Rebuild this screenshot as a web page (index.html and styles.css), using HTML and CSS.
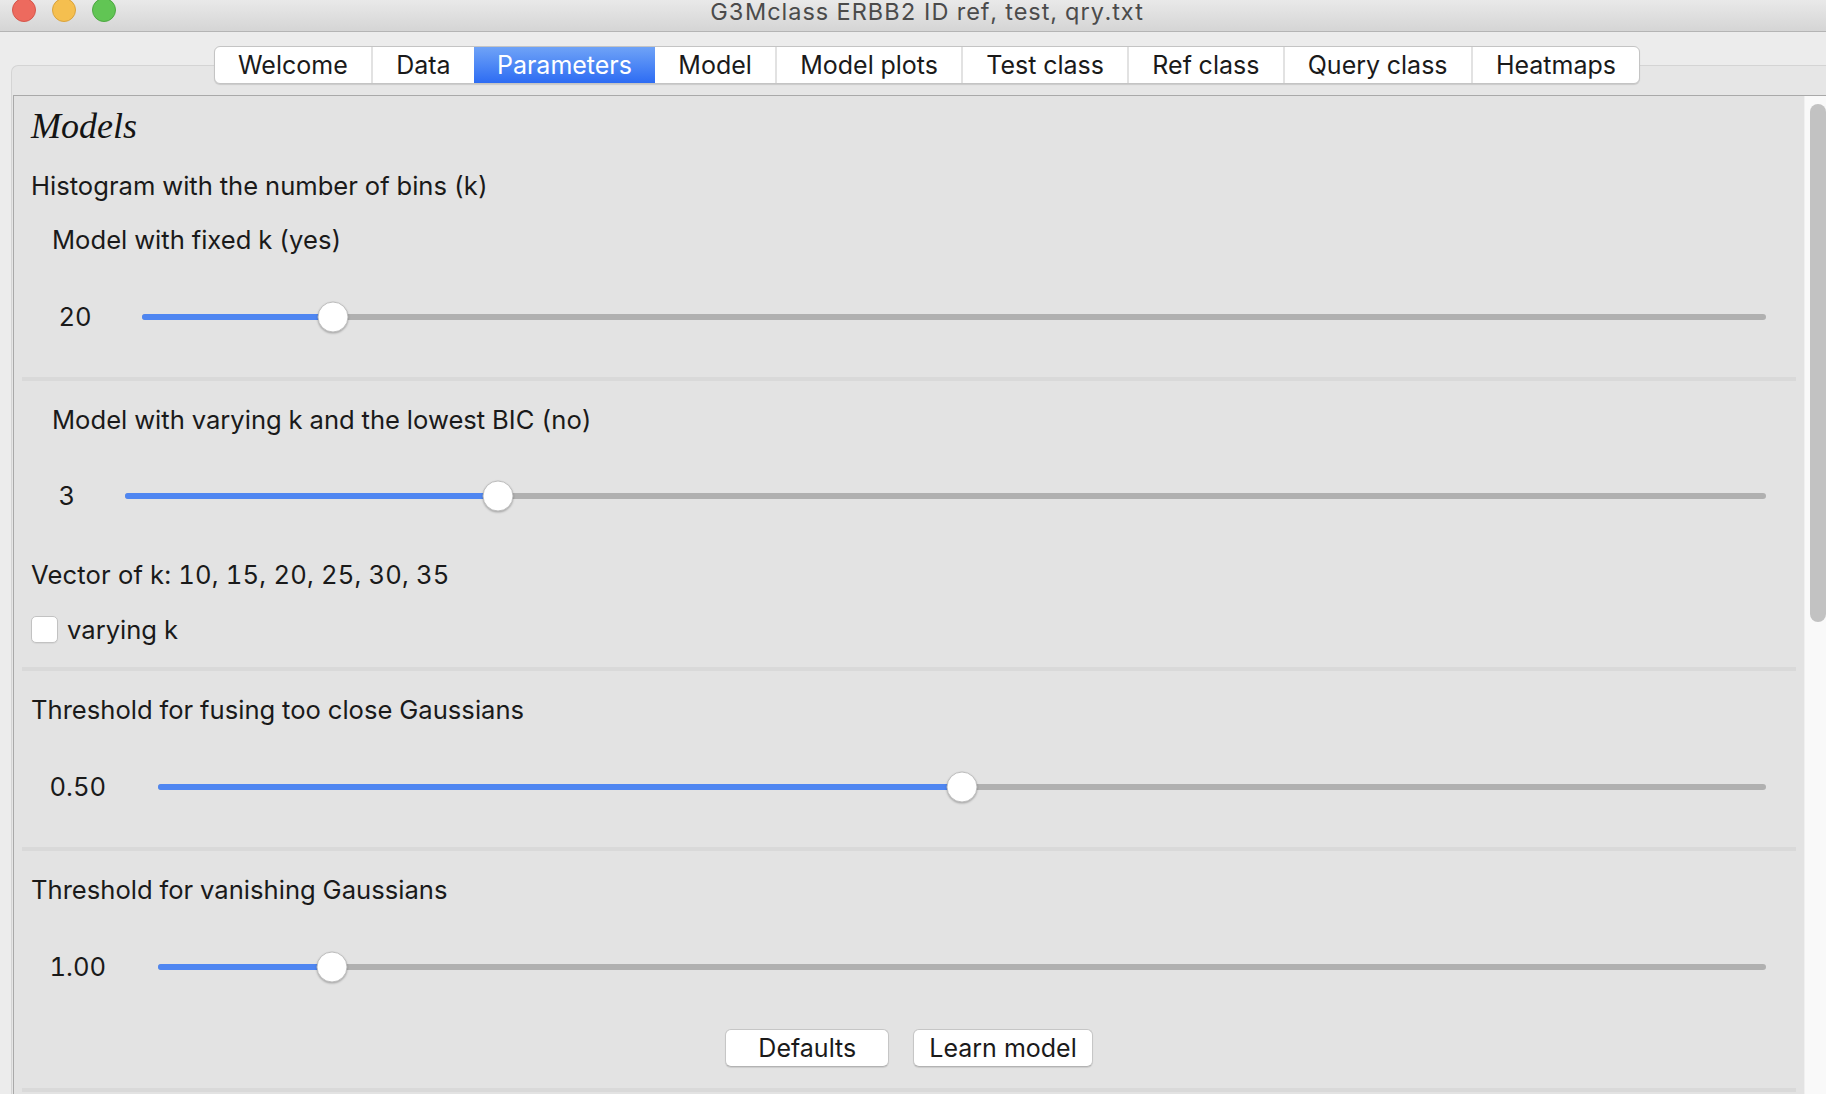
FILE: index.html
```html
<!DOCTYPE html>
<html lang="en">
<head>
<meta charset="utf-8">
<title>G3Mclass ERBB2 ID ref, test, qry.txt</title>
<link rel="stylesheet" href="styles.css">
</head>
<body>
<div class="window">
  <header class="titlebar">
    <div class="lights">
      <span class="light red"></span>
      <span class="light yellow"></span>
      <span class="light green"></span>
    </div>
    <div class="title">G3Mclass ERBB2 ID ref, test, qry.txt</div>
    <div class="spacer"></div>
  </header>

  <div class="tabwidget">
    <nav class="tabbar">
      <div class="tabs">
        <span class="tab">Welcome</span>
        <span class="tab">Data</span>
        <span class="tab active">Parameters</span>
        <span class="tab after-active">Model</span>
        <span class="tab">Model plots</span>
        <span class="tab">Test class</span>
        <span class="tab">Ref class</span>
        <span class="tab">Query class</span>
        <span class="tab">Heatmaps</span>
      </div>
    </nav>

    <div class="pane">
      <div class="scrollarea">
        <div class="viewport">
          <h1 class="models">Models</h1>

          <section class="section">
            <p class="heading gap-25">Histogram with the number of bins (k)</p>
            <p class="heading sub gap-24">Model with fixed k (yes)</p>
            <div class="slider-row sub gap-41">
              <span class="val">20</span>
              <div class="track"><div class="fill" style="width:11.8%"></div><span class="knob" style="left:11.8%"></span></div>
            </div>
          </section>
          <hr class="sep">

          <section class="section">
            <p class="heading sub gap-24">Model with varying k and the lowest BIC (no)</p>
            <div class="slider-row sub gap-41">
              <span class="val">3</span>
              <div class="track"><div class="fill" style="width:22.7%"></div><span class="knob" style="left:22.7%"></span></div>
            </div>
            <p class="heading gap-44 wide">Vector of k: 10, 15, 20, 25, 30, 35</p>
            <label class="check-row gap-25">
              <span class="checkbox"></span>
              <span class="check-label">varying k</span>
            </label>
          </section>
          <hr class="sep sep-close">

          <section class="section">
            <p class="heading gap-24">Threshold for fusing too close Gaussians</p>
            <div class="slider-row gap-42">
              <span class="val">0.50</span>
              <div class="track"><div class="fill" style="width:50%"></div><span class="knob" style="left:50%"></span></div>
            </div>
          </section>
          <hr class="sep">

          <section class="section">
            <p class="heading gap-24">Threshold for vanishing Gaussians</p>
            <div class="slider-row gap-42">
              <span class="val">1.00</span>
              <div class="track"><div class="fill" style="width:10.8%"></div><span class="knob" style="left:10.8%"></span></div>
            </div>
            <div class="buttons gap-42">
              <button class="btn">Defaults</button>
              <button class="btn">Learn model</button>
            </div>
          </section>
          <hr class="sep sep-close">
        </div>
        <div class="scrollbar"><div class="thumb"></div></div>
      </div>
    </div>
  </div>
</div>
</body>
</html>
```

FILE: styles.css
```css
* { box-sizing: border-box; }

html, body {
  margin: 0;
  padding: 0;
  height: 100%;
  overflow: hidden;
  background: #ececec;
}

body {
  font-family: Inter, "Noto Sans", "Liberation Sans", sans-serif;
  font-variant-numeric: tabular-nums;
  color: #1a1a1a;
}

.window {
  width: 1854px;
  height: 1094px;
  display: flex;
  flex-direction: column;
  background: #ececec;
}

/* ---------- title bar ---------- */
.titlebar {
  height: 32px;
  flex: none;
  display: grid;
  grid-template-columns: 1fr auto 1fr;
  align-items: start;
  background: linear-gradient(#e9e9e9, #d5d5d5);
  border-bottom: 1px solid #b4b4b4;
}

.lights {
  display: flex;
  gap: 16px;
  padding-left: 12px;
  margin-top: -2px;
}

.light {
  width: 24px;
  height: 24px;
  border-radius: 50%;
  display: block;
}
.light.red { background: #ed6a5e; border: 1px solid #d5564b; }
.light.yellow { background: #f5bf4f; border: 1px solid #d9a33d; }
.light.green { background: #61c554; border: 1px solid #4ea843; }

.title {
  font-size: 23.5px;
  line-height: 24px;
  letter-spacing: 1px;
  color: #4b4b4b;
  white-space: nowrap;
}

/* ---------- tabs ---------- */
.tabwidget {
  flex: 1;
  display: flex;
  flex-direction: column;
  min-height: 0;
}

.tabbar {
  display: flex;
  justify-content: center;
  margin-top: 14px;
  position: relative;
  z-index: 2;
}

.tabs {
  display: flex;
  height: 38px;
  background: #fff;
  border: 1px solid #c4c4c4;
  border-radius: 6px;
  box-shadow: 0 1px 1px rgba(0, 0, 0, 0.12);
  overflow: hidden;
}

.tab {
  font-size: 25px;
  line-height: 36px;
  padding: 0 23.2px;
  color: #1a1a1a;
  border-left: 2px solid #e2e2e2;
  white-space: nowrap;
}
.tab:first-child { border-left: none; }
.tab.active {
  color: #fff;
  border-left: none;
  background: linear-gradient(#6fa3f7, #2d6cf3);
}
.tab.after-active { border-left: none; }

/* ---------- pane ---------- */
.pane {
  flex: 1;
  margin: -19px 11px 0 11px;
  background: #e6e6e6;
  border-top: 1px solid #d4d4d4;
  border-left: 1px solid #d4d4d4;
  border-top-left-radius: 7px;
  padding: 29px 0 0 1px;
  display: flex;
  min-height: 0;
}

.scrollarea {
  flex: 1;
  display: flex;
  border-top: 1px solid #a9a9a9;
  border-left: 1px solid #a9a9a9;
  background: #e3e3e3;
  min-height: 0;
}

.viewport {
  width: 1790px;
  flex: none;
  padding: 0 8px;
}

.scrollbar {
  width: 30px;
  flex: none;
  background: #f9f9f9;
  border-left: 1px solid #f0f0f0;
  padding: 8px 0 0 5px;
}

.thumb {
  width: 16px;
  height: 518px;
  border-radius: 8px;
  background: #c2c2c2;
}

/* ---------- content ---------- */
.models {
  margin: 10px 0 0 9px;
  font-family: "Liberation Serif", "DejaVu Serif", serif;
  font-style: italic;
  font-weight: normal;
  font-size: 36px;
  line-height: 40px;
  color: #141414;
}

.section { display: flex; flex-direction: column; }

.heading {
  margin: 0;
  padding-left: 9px;
  font-size: 25.6px;
  line-height: 30px;
  white-space: nowrap;
}
.heading.sub { padding-left: 30px; }
.heading.wide { letter-spacing: 0.15px; }

.gap-24 { margin-top: 24px; }
.gap-25 { margin-top: 25px; }
.gap-41 { margin-top: 41.5px; }
.gap-42 { margin-top: 42px; }
.gap-44 { margin-top: 44px; }

.slider-row {
  display: flex;
  align-items: center;
  height: 40px;
  padding: 0 30px 0 27.5px;
}
.slider-row.sub { padding-left: 36.5px; }

.val {
  font-size: 25.6px;
  line-height: 30px;
  margin-right: 52px;
  white-space: nowrap;
}
.slider-row.sub .val { margin-right: 50px; }

.track {
  flex: 1;
  height: 6px;
  border-radius: 3px;
  background: #b0b0b0;
  position: relative;
}

.fill {
  height: 100%;
  border-radius: 3px 0 0 3px;
  background: #4f86f1;
}

.knob {
  position: absolute;
  top: 50%;
  width: 31px;
  height: 31px;
  border-radius: 50%;
  background: #fff;
  border: 1px solid #bdbdbd;
  box-shadow: 0 1px 2px rgba(0, 0, 0, 0.25);
  transform: translate(-50%, -50%);
}

.check-row {
  display: flex;
  align-items: center;
  height: 30px;
  padding-left: 9px;
}

.checkbox {
  width: 27px;
  height: 27px;
  border-radius: 5px;
  background: #fff;
  border: 1px solid #c2c2c2;
  box-shadow: 0 1px 1px rgba(0, 0, 0, 0.06);
  margin-right: 9px;
  margin-top: -2px;
}

.check-label {
  font-size: 25.6px;
  line-height: 30px;
}

.sep {
  margin: 40px 0 0 0;
  border: none;
  height: 4px;
  background: #d9d9d9;
}
.sep.sep-close { margin-top: 21.5px; }

.buttons {
  display: flex;
  justify-content: center;
  gap: 24px;
}

.btn {
  min-width: 164px;
  height: 38px;
  padding: 0 15px;
  background: #fff;
  border: 1px solid #c6c6c6;
  border-bottom-color: #b3b3b3;
  border-radius: 6px;
  box-shadow: 0 1px 1px rgba(0, 0, 0, 0.1);
  font-family: Inter, "Noto Sans", "Liberation Sans", sans-serif;
  font-size: 25px;
  line-height: 34px;
  color: #1a1a1a;
}
```
